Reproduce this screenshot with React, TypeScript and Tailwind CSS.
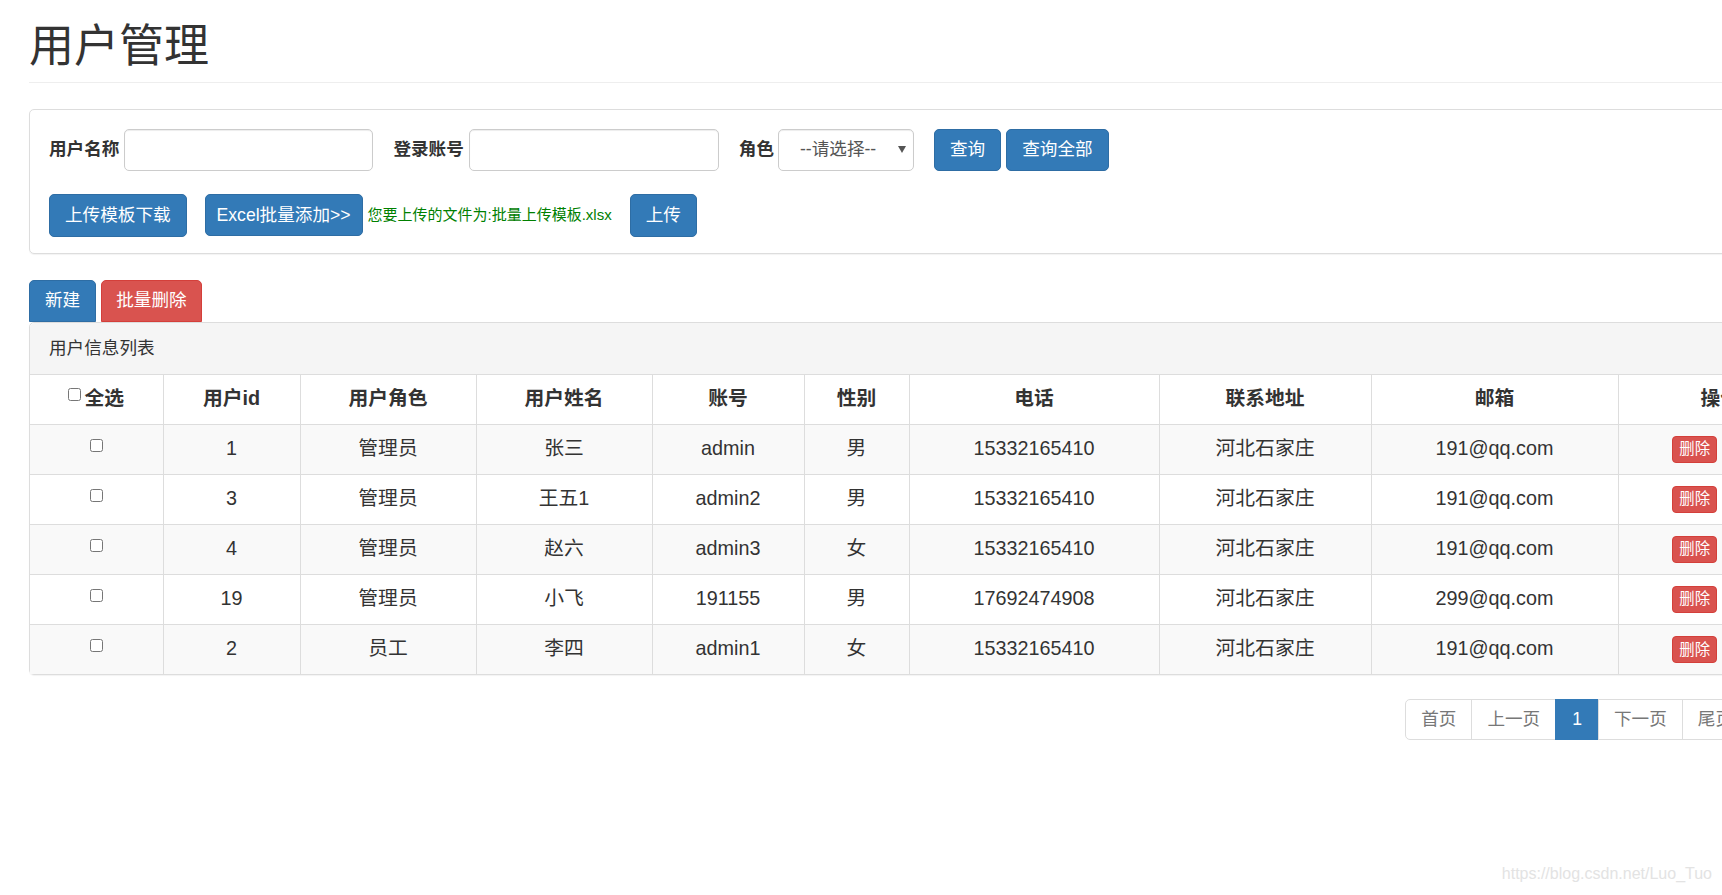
import { useState } from "react";

type User = {
  id: number;
  role: string;
  name: string;
  account: string;
  gender: string;
  phone: string;
  address: string;
  email: string;
};

const users: User[] = [
  { id: 1, role: "管理员", name: "张三", account: "admin", gender: "男", phone: "15332165410", address: "河北石家庄", email: "191@qq.com" },
  { id: 3, role: "管理员", name: "王五1", account: "admin2", gender: "男", phone: "15332165410", address: "河北石家庄", email: "191@qq.com" },
  { id: 4, role: "管理员", name: "赵六", account: "admin3", gender: "女", phone: "15332165410", address: "河北石家庄", email: "191@qq.com" },
  { id: 19, role: "管理员", name: "小飞", account: "191155", gender: "男", phone: "17692474908", address: "河北石家庄", email: "299@qq.com" },
  { id: 2, role: "员工", name: "李四", account: "admin1", gender: "女", phone: "15332165410", address: "河北石家庄", email: "191@qq.com" },
];

const columns = ["用户id", "用户角色", "用户姓名", "账号", "性别", "电话", "联系地址", "邮箱", "操作"];
const colWidths = ["w-[133px]", "w-[137px]", "w-[176px]", "w-[176px]", "w-[152px]", "w-[105px]", "w-[250px]", "w-[212px]", "w-[247px]", "w-[204px]"];

// padding and height are set per button so that no two classes fight
const btnPrimary = "rounded-[5px] border border-[#2e6da4] bg-[#337ab7] text-[17.6px] text-white";
const btnDanger = "rounded-[5px] border border-[#d43f3a] bg-[#d9534f] text-[17.6px] text-white";
const inputCls =
  "h-[42px] rounded-[5px] border border-[#ccc] bg-white px-3 shadow-[inset_0_1px_1px_rgba(0,0,0,0.075)] outline-none";

export default function App() {
  const [checked, setChecked] = useState<number[]>([]);
  const [all, setAll] = useState(false);

  const toggle = (id: number) =>
    setChecked((c) => (c.includes(id) ? c.filter((x) => x !== id) : [...c, id]));

  return (
    <div className="relative h-screen w-full overflow-hidden bg-white font-['Liberation_Sans','Noto_Sans_CJK_SC',sans-serif] text-[#333]">
      <div className="w-[1821px] pl-[29px]">
        {/* page header */}
        <div className="mt-[22px] border-b border-[#eee] pb-[10px]">
          <h1 className="text-[45px] font-normal leading-[1.1]">用户管理</h1>
        </div>

        {/* search panel */}
        <div className="mt-[26px] rounded-[5px] border border-[#ddd] px-[19px] pb-[16px] pt-[19px] shadow-[0_1px_1px_rgba(0,0,0,0.05)]">
          <div className="flex items-center">
            <label className="text-[17.6px] font-bold">用户名称</label>
            <input className={`${inputCls} ml-[5px] w-[249px]`} />
            <label className="ml-[20px] text-[17.6px] font-bold">登录账号</label>
            <input className={`${inputCls} ml-[5px] w-[250px]`} />
            <label className="ml-[20px] text-[17.6px] font-bold">角色</label>
            <div className="relative ml-[4px]">
              <select className="h-[42px] w-[136px] appearance-none rounded-[5px] border border-[#ccc] bg-white pl-[21px] text-[17.6px] text-[#555] shadow-[inset_0_1px_1px_rgba(0,0,0,0.075)] outline-none">
                <option>--请选择--</option>
                <option>管理员</option>
                <option>员工</option>
              </select>
              <svg className="pointer-events-none absolute right-[8px] top-[17px]" width="8" height="7" viewBox="0 0 8 7">
                <path d="M0 0h8L4 7z" fill="#555" />
              </svg>
            </div>
            <button className={`${btnPrimary} ml-[20px] h-[42px] px-[15px]`}>查询</button>
            <button className={`${btnPrimary} ml-[5px] h-[42px] px-[15px]`}>查询全部</button>
          </div>

          <div className="mt-[23px] flex items-center">
            <button className={`${btnPrimary} h-[43px] px-[15px]`}>上传模板下载</button>
            <button className={`${btnPrimary} ml-[18px] h-[42px] px-[11px]`}>Excel批量添加&gt;&gt;</button>
            <span className="ml-[5px] text-[15px] text-[#008000]">您要上传的文件为:批量上传模板.xlsx</span>
            <button className={`${btnPrimary} ml-[18px] h-[43px] px-[15px]`}>上传</button>
          </div>
        </div>

        {/* toolbar */}
        <div className="mt-[26px] flex">
          <button className={`${btnPrimary} h-[42px] rounded-b-none px-[15px]`}>新建</button>
          <button className={`${btnDanger} ml-[5px] h-[42px] rounded-b-none px-[14px]`}>批量删除</button>
        </div>

        {/* list panel */}
        <div className="rounded-[5px] border border-[#ddd] shadow-[0_1px_1px_rgba(0,0,0,0.05)]">
          <div className="flex h-[51px] items-center rounded-t-[5px] bg-[#f5f5f5] px-[19px] text-[17.6px]">
            用户信息列表
          </div>
          <table className="w-full table-fixed border-collapse text-[19.8px]">
            <colgroup>
              {colWidths.map((w, i) => (
                <col key={i} className={w} />
              ))}
            </colgroup>
            <thead>
              <tr className="h-[50px]">
                <th className="border-t border-[#ddd] text-center font-bold">
                  <span className="inline-flex items-center">
                    <input
                      type="checkbox"
                      checked={all}
                      onChange={() => setAll(!all)}
                      className="mr-[3px] h-[13px] w-[13px] -translate-y-[4px]"
                    />
                    全选
                  </span>
                </th>
                {columns.map((c) => (
                  <th key={c} className="whitespace-nowrap border-l border-t border-[#ddd] text-center font-bold">
                    {c}
                  </th>
                ))}
              </tr>
            </thead>
            <tbody>
              {users.map((u, i) => (
                <tr key={u.id} className={`h-[50px] ${i % 2 === 0 ? "bg-[#f9f9f9]" : "bg-white"}`}>
                  <td className="border-t border-[#ddd] text-center">
                    <input
                      type="checkbox"
                      checked={all || checked.includes(u.id)}
                      onChange={() => toggle(u.id)}
                      className="h-[13px] w-[13px] -translate-y-[3px]"
                    />
                  </td>
                  <td className="border-l border-t border-[#ddd] text-center">{u.id}</td>
                  <td className="border-l border-t border-[#ddd] text-center">{u.role}</td>
                  <td className="border-l border-t border-[#ddd] text-center">{u.name}</td>
                  <td className="border-l border-t border-[#ddd] text-center">{u.account}</td>
                  <td className="border-l border-t border-[#ddd] text-center">{u.gender}</td>
                  <td className="border-l border-t border-[#ddd] text-center">{u.phone}</td>
                  <td className="border-l border-t border-[#ddd] text-center">{u.address}</td>
                  <td className="border-l border-t border-[#ddd] text-center">{u.email}</td>
                  <td className="border-l border-t border-[#ddd] text-center">
                    <div className="flex justify-center gap-[6px]">
                      <button className="h-[27px] w-[45px] rounded-[4px] border border-[#d43f3a] bg-[#d9534f] text-[15.4px] text-white">
                        删除
                      </button>
                      <button className="h-[27px] w-[45px] rounded-[4px] border border-[#2e6da4] bg-[#337ab7] text-[15.4px] text-white">
                        修改
                      </button>
                    </div>
                  </td>
                </tr>
              ))}
            </tbody>
          </table>
        </div>

        {/* pagination */}
        <div className="mr-[72px] mt-[24px] flex justify-end">
          <ul className="flex text-[17.6px] text-[#777]">
            <li className="flex h-[41px] items-center rounded-l-[5px] border border-[#ddd] px-[15px]">首页</li>
            <li className="-ml-px flex h-[41px] items-center border border-[#ddd] px-[15px]">上一页</li>
            <li className="-ml-px flex h-[41px] items-center border border-[#337ab7] bg-[#337ab7] px-[16px] text-white">1</li>
            <li className="-ml-px flex h-[41px] items-center border border-[#ddd] px-[15px]">下一页</li>
            <li className="-ml-px flex h-[41px] items-center rounded-r-[5px] border border-[#ddd] px-[15px]">尾页</li>
          </ul>
        </div>
      </div>

      <div className="absolute bottom-[9px] right-[10px] text-[16px] text-[#e3e3e3]">https://blog.csdn.net/Luo_Tuo</div>
    </div>
  );
}
